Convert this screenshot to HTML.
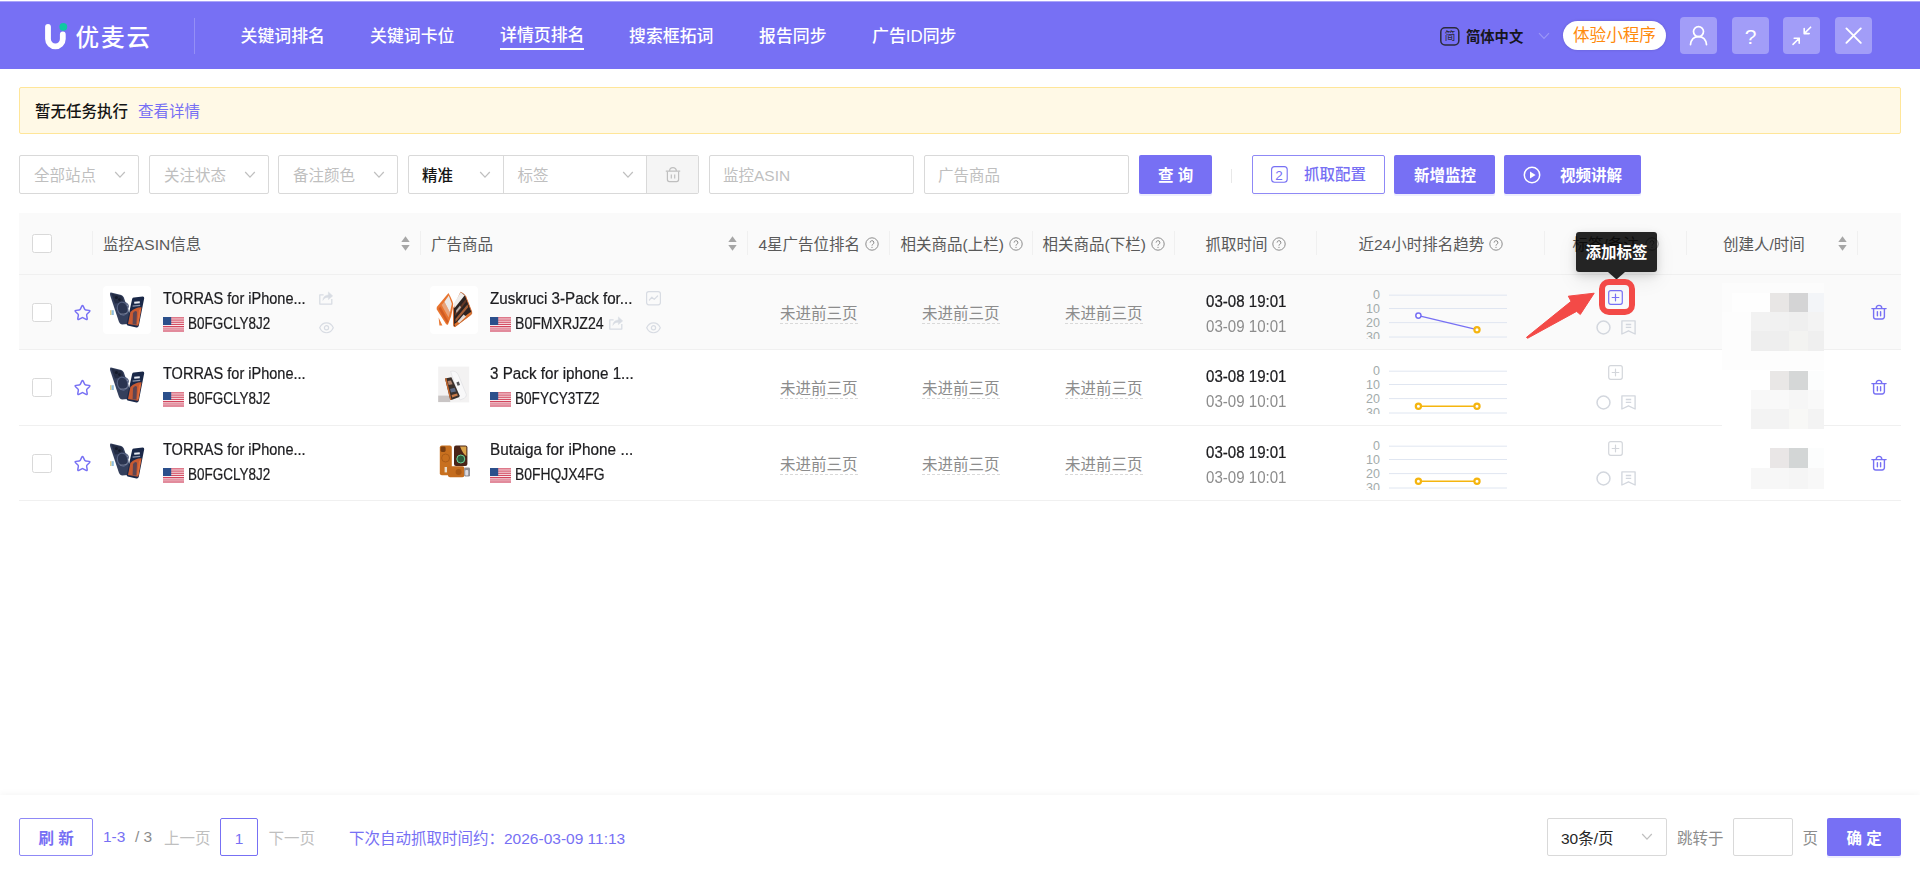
<!DOCTYPE html>
<html lang="zh-CN">
<head>
<meta charset="utf-8">
<title>优麦云 - 详情页排名</title>
<style>
*{box-sizing:border-box;margin:0;padding:0}
html,body{width:1920px;height:878px;overflow:hidden;background:#fff}
body{position:relative;font-family:"Liberation Sans","Noto Sans CJK SC",sans-serif;font-size:15.5px;color:#262626;line-height:1}
.abs{position:absolute}
.t{position:absolute;white-space:nowrap;line-height:20px;height:20px}
svg{position:absolute;overflow:visible}
/* header */
#hd{position:absolute;left:0;top:1px;width:1920px;height:68px;background:#7770f4}
.nav{position:absolute;top:26px;height:22px;line-height:22px;font-size:16.9px;color:#fff;white-space:nowrap;font-weight:500}
.hb{position:absolute;top:17px;width:37px;height:37px;border-radius:4px;background:#a29df8}
/* alert */
#alert{position:absolute;left:19px;top:87px;width:1882px;height:47px;background:#fff9e6;border:1px solid #ffe699;border-radius:2px}
/* filters */
.sel{position:absolute;top:155px;height:39px;border:1px solid #d9d9d9;border-radius:2px;background:#fff}
.ph{color:#bfbfbf}
.btn{position:absolute;top:155px;height:39px;border-radius:2px;background:#7770f4;color:#fff;font-weight:bold;box-shadow:0 2px 0 rgba(119,112,244,.12)}
/* table */
#th{position:absolute;left:19px;top:213px;width:1882px;height:62px;background:#fafafa;border-bottom:1px solid #f0f0f0}
.sep{position:absolute;top:231px;width:1px;height:24px;background:#f0f0f0}
.h{position:absolute;top:234.7px;height:20px;line-height:20px;color:#595959;white-space:nowrap;font-size:15.5px}
.row{position:absolute;left:19px;width:1882px;border-bottom:1px solid #f0f0f0}
.cb{position:absolute;width:19.6px;height:19px;border:1px solid #d9d9d9;border-radius:2.5px;background:#fff}
.g{color:#8c8c8c}
.dash{border-bottom:1px dashed #d9d9d9}
.thumb{position:absolute;width:48px;height:48px;border-radius:4px;background:#fff}
</style>
</head>
<body>

<!-- ================= HEADER ================= -->
<div id="hd"></div><div class="abs" style="left:0;top:1px;width:1920px;height:1px;background:#aaa5f9"></div>
<div id="logo">
<svg style="left:40px;top:18px" width="32" height="36" viewBox="40 18 32 36">
<path d="M48 26.8 V39 a7.4 7.4 0 0 0 14.8 0 V34.4" fill="none" stroke="#fff" stroke-width="5.8" stroke-linecap="round"/>
<circle cx="63.3" cy="26.8" r="3.9" fill="#10c9a2"/>
</svg>
<div class="t" style="left:75.5px;top:22px;height:32px;line-height:32px;font-size:23.6px;color:#fff;letter-spacing:1.9px;font-weight:500">优麦云</div>
<div class="abs" style="left:194px;top:18px;width:1px;height:36px;background:rgba(255,255,255,.22)"></div>
</div>
<div id="navs">
<div class="nav" style="left:240.5px">关键词排名</div>
<div class="nav" style="left:370px">关键词卡位</div>
<div class="nav" style="left:500px;top:25px">详情页排名</div>
<div class="abs" style="left:500px;top:48px;width:84px;height:2px;background:#fff"></div>
<div class="nav" style="left:629px">搜索框拓词</div>
<div class="nav" style="left:759px">报告同步</div>
<div class="nav" style="left:872px">广告ID同步</div>
</div>
<div id="hright">
<svg style="left:1440px;top:27px" width="20" height="19" viewBox="0 0 20 19"><rect x="0.8" y="0.8" width="18" height="17.2" rx="4.2" fill="none" stroke="#2b2b3a" stroke-width="1.5"/></svg>
<div class="t" style="left:1444.5px;top:27px;font-size:11px;color:#2b2b3a;line-height:19px;height:19px">简</div>
<div class="t" style="left:1466px;top:26px;font-size:14.3px;font-weight:bold;color:#16161d;line-height:22px;height:22px">简体中文</div>
<svg style="left:1538px;top:32px" width="12" height="8" viewBox="0 0 12 8"><path d="M1 1.2 L6 6.4 L11 1.2" fill="none" stroke="#9b96f7" stroke-width="1.2"/></svg>
<div class="abs" style="left:1563px;top:21px;width:103px;height:29px;border-radius:15px;background:#fff;box-shadow:0 0 3px rgba(0,0,0,.15)"></div>
<div class="t" style="left:1573px;top:24px;font-size:16.6px;color:#ff8a0c;line-height:24px;height:24px">体验小程序</div>
<div class="hb" style="left:1680px"></div>
<div class="hb" style="left:1732px"></div>
<div class="hb" style="left:1783px"></div>
<div class="hb" style="left:1835px"></div>
<svg style="left:1680px;top:17px" width="37" height="37" viewBox="0 0 37 37"><circle cx="18.5" cy="14.6" r="5" fill="none" stroke="#fff" stroke-width="1.7"/><path d="M10.5 27.6 c0.6-5.2 3.8-8 8-8 s7.4 2.8 8 8" fill="none" stroke="#fff" stroke-width="1.7" stroke-linecap="round"/></svg>
<div class="t" style="left:1732px;top:17px;width:37px;height:37px;line-height:39px;text-align:center;font-size:21px;color:#fff">?</div>
<svg style="left:1783px;top:17px" width="37" height="37" viewBox="0 0 37 37" fill="none" stroke="#fff" stroke-width="1.6" stroke-linecap="round" stroke-linejoin="round"><path d="M27.6 10.2 L21.2 16.6 M21.2 11.6 V16.6 H26.2"/><path d="M10 27.4 L16.2 21.2 M11.2 21.2 H16.2 V26.2"/></svg>
<svg style="left:1835px;top:17px" width="37" height="37" viewBox="0 0 37 37" fill="none" stroke="#fff" stroke-width="1.9" stroke-linecap="round"><path d="M11.4 11.4 L25.8 25.8 M25.8 11.4 L11.4 25.8"/></svg>
</div>

<!-- ================= ALERT ================= -->
<div id="alert">
<div class="t" style="left:15px;top:13.5px;color:#141414;font-weight:500">暂无任务执行</div>
<div class="t" style="left:118px;top:13.5px;color:#7770f4">查看详情</div>
</div>

<!-- ================= FILTERS ================= -->
<div id="filters">
<div class="sel" style="left:19px;width:120px"></div><div class="t ph" style="left:34px;top:166px">全部站点</div><svg style="left:114px;top:171px" width="12" height="8" viewBox="0 0 12 8"><path d="M1.2 1 L6 6.2 L10.8 1" fill="none" stroke="#bfbfbf" stroke-width="1.2"/></svg>
<div class="sel" style="left:149px;width:120px"></div><div class="t ph" style="left:164px;top:166px">关注状态</div><svg style="left:244px;top:171px" width="12" height="8" viewBox="0 0 12 8"><path d="M1.2 1 L6 6.2 L10.8 1" fill="none" stroke="#bfbfbf" stroke-width="1.2"/></svg>
<div class="sel" style="left:278px;width:120px"></div><div class="t ph" style="left:293px;top:166px">备注颜色</div><svg style="left:373px;top:171px" width="12" height="8" viewBox="0 0 12 8"><path d="M1.2 1 L6 6.2 L10.8 1" fill="none" stroke="#bfbfbf" stroke-width="1.2"/></svg>
<div class="sel" style="left:408px;width:291px"></div>
<div class="abs" style="left:503px;top:156px;width:1px;height:37px;background:#d9d9d9"></div>
<div class="abs" style="left:646px;top:156px;width:52px;height:37px;background:#f5f5f5;border-left:1px solid #d9d9d9"></div>
<div class="t" style="left:422px;top:166px;color:#141414;font-weight:500">精准</div><svg style="left:479px;top:171px" width="12" height="8" viewBox="0 0 12 8"><path d="M1.2 1 L6 6.2 L10.8 1" fill="none" stroke="#bfbfbf" stroke-width="1.2"/></svg>
<div class="t ph" style="left:517.5px;top:166px">标签</div><svg style="left:622px;top:171px" width="12" height="8" viewBox="0 0 12 8"><path d="M1.2 1 L6 6.2 L10.8 1" fill="none" stroke="#bfbfbf" stroke-width="1.2"/></svg>
<svg style="left:664px;top:166px" width="18" height="17" viewBox="0 0 18 17" fill="none" stroke="#bfbfbf" stroke-width="1.2"><path d="M1.8 5.2 H16.2 M5.6 5 C5.6 0.6 12.4 0.6 12.4 5"/><path d="M3.4 5.4 V13.6 a2 2 0 0 0 2 2 H12.6 a2 2 0 0 0 2-2 V5.4"/><path d="M7.3 8.6 V12.4 M10.7 8.6 V12.4"/></svg>
<div class="sel" style="left:709px;width:205px"></div><div class="t ph" style="left:723px;top:166px">监控ASIN</div>
<div class="sel" style="left:924px;width:205px"></div><div class="t ph" style="left:938px;top:166px">广告商品</div>
<div class="btn" style="left:1139px;width:73px"></div><div class="t" style="left:1158px;top:165.5px;color:#fff;font-weight:bold;word-spacing:0px">查 询</div>
<div class="abs" style="left:1231px;top:169px;width:1px;height:14px;background:#e8e8e8"></div>
<div class="abs" style="left:1252px;top:155px;width:133px;height:39px;border:1px solid #8f89f6;border-radius:2px;background:#fff;box-shadow:0 2px 0 rgba(0,0,0,.015)"></div>
<svg style="left:1271px;top:166px" width="17" height="17" viewBox="0 0 17 17"><rect x="0.6" y="0.6" width="15.6" height="15.6" rx="3" fill="none" stroke="#7770f4" stroke-width="1.1"/></svg><div class="t" style="left:1275.3px;top:165.5px;font-size:13.5px;color:#7770f4">2</div><div class="t" style="left:1304px;top:165px;color:#7770f4;font-weight:500">抓取配置</div>
<div class="btn" style="left:1394px;width:101px"></div><div class="t" style="left:1414px;top:165.5px;color:#fff;font-weight:bold">新增监控</div>
<div class="btn" style="left:1504px;width:137px"></div><svg style="left:1522.5px;top:165.5px" width="18" height="18" viewBox="0 0 18 18"><circle cx="9" cy="9" r="7.7" fill="none" stroke="#fff" stroke-width="1.5"/><path d="M7 5.4 L12.6 9 L7 12.6 Z" fill="#fff"/></svg><div class="t" style="left:1560px;top:165.5px;color:#fff;font-weight:bold">视频讲解</div>
</div>

<!-- ================= TABLE ================= -->
<div id="th"></div>
<div id="thc">
<div class="cb" style="left:32px;top:234px"></div>
<div class="sep" style="left:92px"></div><div class="sep" style="left:420px"></div><div class="sep" style="left:747px"></div><div class="sep" style="left:889px"></div><div class="sep" style="left:1032px"></div><div class="sep" style="left:1174px"></div><div class="sep" style="left:1316px"></div><div class="sep" style="left:1544px"></div><div class="sep" style="left:1686px"></div><div class="sep" style="left:1857px"></div>
<div class="h" style="left:103px">监控ASIN信息</div><svg style="left:400.5px;top:236px" width="9" height="15" viewBox="0 0 9 15"><path d="M4.5 0.3 L8.7 6 H0.3 Z" fill="#a6a6a6"/><path d="M4.5 14.7 L8.7 9 H0.3 Z" fill="#a6a6a6"/></svg>
<div class="h" style="left:431px">广告商品</div><svg style="left:727.5px;top:236px" width="9" height="15" viewBox="0 0 9 15"><path d="M4.5 0.3 L8.7 6 H0.3 Z" fill="#a6a6a6"/><path d="M4.5 14.7 L8.7 9 H0.3 Z" fill="#a6a6a6"/></svg>
<div class="h" style="left:758.5px">4星广告位排名</div><svg style="left:865px;top:237px" width="14" height="14" viewBox="0 0 14 14"><circle cx="7" cy="7" r="6.2" fill="none" stroke="#8c8c8c" stroke-width="1"/><path d="M5.1 5.6 a1.9 1.9 0 1 1 2.7 1.7 c-0.6 0.3-0.8 0.6-0.8 1.3" fill="none" stroke="#8c8c8c" stroke-width="1"/><circle cx="7" cy="10.3" r="0.65" fill="#8c8c8c"/></svg>
<div class="h" style="left:900.5px">相关商品(上栏)</div><svg style="left:1008.5px;top:237px" width="14" height="14" viewBox="0 0 14 14"><circle cx="7" cy="7" r="6.2" fill="none" stroke="#8c8c8c" stroke-width="1"/><path d="M5.1 5.6 a1.9 1.9 0 1 1 2.7 1.7 c-0.6 0.3-0.8 0.6-0.8 1.3" fill="none" stroke="#8c8c8c" stroke-width="1"/><circle cx="7" cy="10.3" r="0.65" fill="#8c8c8c"/></svg>
<div class="h" style="left:1042.5px">相关商品(下栏)</div><svg style="left:1151px;top:237px" width="14" height="14" viewBox="0 0 14 14"><circle cx="7" cy="7" r="6.2" fill="none" stroke="#8c8c8c" stroke-width="1"/><path d="M5.1 5.6 a1.9 1.9 0 1 1 2.7 1.7 c-0.6 0.3-0.8 0.6-0.8 1.3" fill="none" stroke="#8c8c8c" stroke-width="1"/><circle cx="7" cy="10.3" r="0.65" fill="#8c8c8c"/></svg>
<div class="h" style="left:1205.5px">抓取时间</div><svg style="left:1272px;top:237px" width="14" height="14" viewBox="0 0 14 14"><circle cx="7" cy="7" r="6.2" fill="none" stroke="#8c8c8c" stroke-width="1"/><path d="M5.1 5.6 a1.9 1.9 0 1 1 2.7 1.7 c-0.6 0.3-0.8 0.6-0.8 1.3" fill="none" stroke="#8c8c8c" stroke-width="1"/><circle cx="7" cy="10.3" r="0.65" fill="#8c8c8c"/></svg>
<div class="h" style="left:1358.5px">近24小时排名趋势</div><svg style="left:1489px;top:237px" width="14" height="14" viewBox="0 0 14 14"><circle cx="7" cy="7" r="6.2" fill="none" stroke="#8c8c8c" stroke-width="1"/><path d="M5.1 5.6 a1.9 1.9 0 1 1 2.7 1.7 c-0.6 0.3-0.8 0.6-0.8 1.3" fill="none" stroke="#8c8c8c" stroke-width="1"/><circle cx="7" cy="10.3" r="0.65" fill="#8c8c8c"/></svg>
<div class="h" style="left:1572.5px">标签/备注</div><svg style="left:1645px;top:237px" width="14" height="14" viewBox="0 0 14 14"><circle cx="7" cy="7" r="6.2" fill="none" stroke="#8c8c8c" stroke-width="1"/><path d="M5.1 5.6 a1.9 1.9 0 1 1 2.7 1.7 c-0.6 0.3-0.8 0.6-0.8 1.3" fill="none" stroke="#8c8c8c" stroke-width="1"/><circle cx="7" cy="10.3" r="0.65" fill="#8c8c8c"/></svg>
<div class="h" style="left:1723px">创建人/时间</div><svg style="left:1837.5px;top:236px" width="9" height="15" viewBox="0 0 9 15"><path d="M4.5 0.3 L8.7 6 H0.3 Z" fill="#a6a6a6"/><path d="M4.5 14.7 L8.7 9 H0.3 Z" fill="#a6a6a6"/></svg>
</div>
<div id="rows">
<div class="abs" style="left:19px;top:275px;width:1882px;height:74px;background:#fafafa"></div>
<div class="abs" style="left:19px;top:349px;width:1882px;height:1px;background:#f0f0f0"></div>
<div class="abs" style="left:19px;top:425px;width:1882px;height:1px;background:#f0f0f0"></div>
<div class="abs" style="left:19px;top:500px;width:1882px;height:1px;background:#f0f0f0"></div>
<!-- row 1 -->
<div class="cb" style="left:32px;top:302.7px"></div><svg style="left:72.7px;top:302.9px" width="19" height="19" viewBox="0 0 19 19"><path d="M8.80 3.14 Q9.50 1.70 10.20 3.14 L11.62 6.08 Q11.97 6.80 12.76 6.91 L16.00 7.36 Q17.58 7.57 16.43 8.68 L14.07 10.94 Q13.49 11.50 13.64 12.29 L14.21 15.50 Q14.50 17.08 13.09 16.32 L10.21 14.78 Q9.50 14.40 8.79 14.78 L5.91 16.32 Q4.50 17.08 4.79 15.50 L5.36 12.29 Q5.51 11.50 4.93 10.94 L2.57 8.68 Q1.42 7.57 3.00 7.36 L6.24 6.91 Q7.03 6.80 7.38 6.08 Z" fill="none" stroke="#7770f4" stroke-width="1.45" stroke-linejoin="round"/></svg>
<div class="thumb" style="left:103px;top:286px;background:#fff"></div><svg style="left:103px;top:286px;filter:blur(.35px)" width="48" height="48" viewBox="0 0 48 48"><rect x="7" y="24.2" width="1.6" height="4.8" fill="#e6cf8a"/><rect x="8.6" y="24.2" width="2.2" height="4.8" fill="#8fbfe0"/><path d="M8 6.6 L18.2 9 Q20 9.6 20.8 11.6 L27.6 31 Q29.4 36.6 27.6 37.8 L19 38.6 Q17 38.4 16 36 L7.2 9.4 Q6.6 6.4 8 6.6 Z" fill="#343f5c"/><path d="M8.4 7.6 L17.8 9.8 Q19.2 10.4 19.6 12 L20.6 16 L12 17.4 Z" fill="#232b42"/><circle cx="13.4" cy="11.4" r="1.5" fill="#141a2a"/><circle cx="16.4" cy="13.6" r="1.3" fill="#141a2a"/><ellipse cx="19.6" cy="22.6" rx="5.2" ry="6.6" transform="rotate(-16 19.6 22.6)" fill="#2a3450" stroke="#566283" stroke-width="1.1"/><path d="M22 16.6 Q26 18 25.2 21.6" fill="none" stroke="#4a5676" stroke-width="1.1"/><path d="M17 28 Q21 28.6 24.6 26.8" fill="none" stroke="#8b93a8" stroke-width=".7"/><path d="M31 11.4 L39.8 10.4 Q41.4 10.4 41.2 12.2 L35.8 39.8 Q35.2 41.8 33.4 41.4 L24.6 39.4 Q23.4 39 23.8 37.6 L29.2 12.8 Q29.6 11.4 31 11.4 Z" fill="#1a2848"/><path d="M27.4 26 Q33 21 38.6 21.4 L35.2 39.8 L25 38 Z" fill="#c85a32"/><path d="M30 27 Q32.6 23.6 34 26 L33.4 38.6 L29.6 38.4 Z" fill="#44405a" opacity=".8"/><path d="M36 24 L38 22.6 L35.4 38.6 L34 38 Z" fill="#e2703c" opacity=".9"/><rect x="31.2" y="15.6" width="5.6" height="1.8" fill="#e8ebf3" transform="rotate(-5 34 16.5)"/><rect x="29.6" y="19.2" width="7.6" height="1.2" fill="#8c95ad" transform="rotate(-5 33 19.8)"/></svg>
<div class="t" style="left:163px;top:289px;color:#1c1c1f;-webkit-text-stroke:.22px #1c1c1f;font-size:15.8px;transform:scaleX(0.9191);transform-origin:0 0">TORRAS for iPhone...</div><svg style="left:163px;top:317px" width="21" height="15" viewBox="0 0 21 15"><rect width="21" height="15" fill="#fbf3f4"/><rect y="0.3" width="21" height="1.15" fill="#d2455d"/><rect y="2.5" width="21" height="1.15" fill="#d2455d"/><rect y="4.65" width="21" height="1.15" fill="#d2455d"/><rect y="6.8" width="21" height="1.15" fill="#d2455d"/><rect y="8.95" width="21" height="1.15" fill="#d2455d"/><rect y="10.5" width="21" height="4.5" fill="#e28b9c"/><rect y="11.8" width="21" height="0.6" fill="#eeb9c3"/><rect width="8.2" height="8" fill="#2b4f8b"/></svg><div class="t" style="left:187.6px;top:314px;color:#1c1c1f;-webkit-text-stroke:.22px #1c1c1f;font-size:15.8px;transform:scaleX(0.8535);transform-origin:0 0">B0FGCLY8J2</div>
<svg style="left:319.3px;top:290.6px" width="14" height="14" viewBox="0 0 14 14" fill="none" stroke="#d8dce3" stroke-width="1.25" stroke-linejoin="round"><path d="M4.6 3.8 H0.8 V13 H12.8 V8"/><path d="M3.8 9.4 C4 6 6 4.2 9.4 4 V0.9 L13.7 4.9 L9.4 8.6 V6.2 C6.8 6.2 5.2 7.2 3.8 9.4 Z" fill="#d8dce3" stroke-width="0.5"/></svg><svg style="left:319.3px;top:321.8px" width="15" height="12" viewBox="0 0 15 12" fill="none" stroke="#d8dce3" stroke-width="1.2"><path d="M0.7 5.8 C3.6 -0.8 11.4 -0.8 14.3 5.8 C11.4 12.4 3.6 12.4 0.7 5.8 Z"/><circle cx="7.5" cy="5.8" r="2.1"/></svg>
<div class="thumb" style="left:430px;top:286px;background:#fff"></div><svg style="left:430px;top:286px;filter:blur(.35px)" width="48" height="48" viewBox="0 0 48 48"><path d="M8.6 31.4 L12.4 39.4 L9.4 39.4 Z" fill="#ea7a35"/><path d="M18.5 6.9 Q22.6 14.6 23.2 17.8 Q23.4 20 21 30.4 L18 38.4 Q17 39.2 16 38 L6.8 23.4 Q6.2 21.8 7.2 20.4 Z" fill="#e8742f"/><path d="M18.8 9.4 L21.8 17.8 L20 26.6 L14.4 15.8 Z" fill="#ebe9e8"/><path d="M14.4 15.8 L20 26.6 L18.6 31.6 L11.6 19 Z" fill="#e9c9b6" opacity=".55"/><path d="M8.6 22.8 L10.4 20.6 L18.6 35.4 L17.2 37.4 Z" fill="#c9531f" opacity=".75"/><path d="M30.7 6.3 Q33.6 7.2 35.6 10.2 L41.6 25.6 Q42.2 27.6 40.8 28.8 L25.2 40.6 Q23.8 41 23.6 39.4 L23.4 22.6 Z" fill="#2c2321" stroke="#d9692b" stroke-width=".9"/><path d="M30.7 6.3 L34.6 9.6 L24.6 22 L23.8 17.4 Z" fill="#efedeb"/><path d="M24.4 38 L40.6 26 L41.6 28 L25 40.6 Z" fill="#e0742f"/><path d="M25 27 L35.4 13.6 L36.4 15.6 L25.2 30 Z" fill="#6a3a26" opacity=".9"/><path d="M25.4 33 L37.4 18.6 L38.4 21 L25.6 36 Z" fill="#b9683c" opacity=".85"/><path d="M27.6 35.6 L33.6 28.6 L36 30.4 L29 37.2 Z" fill="#eceae8" opacity=".9"/><path d="M26 24.6 L30 19.6 L31 21.4 L26.4 27 Z" fill="#e6e2de" opacity=".7"/></svg>
<div class="t" style="left:490px;top:289px;color:#1c1c1f;-webkit-text-stroke:.22px #1c1c1f;font-size:15.8px;transform:scaleX(0.9603);transform-origin:0 0">Zuskruci 3-Pack for...</div><svg style="left:490px;top:317px" width="21" height="15" viewBox="0 0 21 15"><rect width="21" height="15" fill="#fbf3f4"/><rect y="0.3" width="21" height="1.15" fill="#d2455d"/><rect y="2.5" width="21" height="1.15" fill="#d2455d"/><rect y="4.65" width="21" height="1.15" fill="#d2455d"/><rect y="6.8" width="21" height="1.15" fill="#d2455d"/><rect y="8.95" width="21" height="1.15" fill="#d2455d"/><rect y="10.5" width="21" height="4.5" fill="#e28b9c"/><rect y="11.8" width="21" height="0.6" fill="#eeb9c3"/><rect width="8.2" height="8" fill="#2b4f8b"/></svg><div class="t" style="left:515.2px;top:314px;color:#1c1c1f;-webkit-text-stroke:.22px #1c1c1f;font-size:15.8px;transform:scaleX(0.8929);transform-origin:0 0">B0FMXRJZ24</div>
<svg style="left:608.9px;top:315.8px" width="14" height="14" viewBox="0 0 14 14" fill="none" stroke="#d8dce3" stroke-width="1.25" stroke-linejoin="round"><path d="M4.6 3.8 H0.8 V13 H12.8 V8"/><path d="M3.8 9.4 C4 6 6 4.2 9.4 4 V0.9 L13.7 4.9 L9.4 8.6 V6.2 C6.8 6.2 5.2 7.2 3.8 9.4 Z" fill="#d8dce3" stroke-width="0.5"/></svg><svg style="left:646px;top:290.6px" width="15" height="15" viewBox="0 0 15 15" fill="none" stroke="#d8dce3" stroke-width="1.2" stroke-linejoin="round" stroke-linecap="round"><rect x="0.6" y="0.6" width="13.8" height="13.2" rx="2.2"/><path d="M3.4 9 L5.9 6.2 L8.2 8.4 L11.6 5"/></svg><svg style="left:646.2px;top:321.8px" width="15" height="12" viewBox="0 0 15 12" fill="none" stroke="#d8dce3" stroke-width="1.2"><path d="M0.7 5.8 C3.6 -0.8 11.4 -0.8 14.3 5.8 C11.4 12.4 3.6 12.4 0.7 5.8 Z"/><circle cx="7.5" cy="5.8" r="2.1"/></svg>
<div class="t g" style="left:780px;top:304px;width:78px;height:20px;line-height:20px;border-bottom:1px dashed #d9d9d9">未进前三页</div><div class="t g" style="left:922px;top:304px;width:78px;height:20px;line-height:20px;border-bottom:1px dashed #d9d9d9">未进前三页</div><div class="t g" style="left:1065px;top:304px;width:78px;height:20px;line-height:20px;border-bottom:1px dashed #d9d9d9">未进前三页</div>
<div class="t" style="left:1205.5px;top:291.5px;color:#1c1c1f;-webkit-text-stroke:.22px #1c1c1f;font-size:15.8px;transform:scaleX(0.9543);transform-origin:0 0">03-08 19:01</div><div class="t g" style="left:1205.5px;top:317px;font-size:15.8px;transform:scaleX(0.9543);transform-origin:0 0">03-09 10:01</div>
<svg style="left:1340px;top:285.0px;overflow:hidden" width="200" height="53.6" viewBox="1340 285 200 53.6"><g stroke="#e0e6f1" stroke-width="1"><line x1="1389" y1="295.2" x2="1507" y2="295.2"/><line x1="1389" y1="308.5" x2="1507" y2="308.5"/><line x1="1389" y1="322.6" x2="1507" y2="322.6"/><line x1="1389" y1="337.0" x2="1507" y2="337.0"/></g><g font-family="Liberation Sans, sans-serif" font-size="12.5" fill="#a3abab" text-anchor="end"><text x="1380" y="299.5">0</text><text x="1380" y="312.8">10</text><text x="1380" y="326.9">20</text><text x="1380" y="341.3">30</text></g><line x1="1418.4" y1="315.6" x2="1477" y2="329.7" stroke="#7770f4" stroke-width="1.2"/><circle cx="1418.4" cy="315.6" r="2.6" fill="#fff" stroke="#7770f4" stroke-width="1.5"/><circle cx="1477" cy="329.7" r="2.6" fill="#fff" stroke="#f5b50f" stroke-width="2.2"/></svg>
<svg style="left:1608.3px;top:290.3px" width="15" height="15" viewBox="0 0 15 15" fill="none" stroke="#7770f4" stroke-width="1.2" stroke-linecap="round"><rect x="0.7" y="0.7" width="13.6" height="13.6" rx="2"/><path d="M7.5 4.2 V10.8 M4.2 7.5 H10.8"/></svg><svg style="left:1596px;top:320.2px" width="15" height="15" viewBox="0 0 15 15"><circle cx="7.5" cy="7.5" r="6.45" fill="none" stroke="#d3d7de" stroke-width="1.55"/></svg><svg style="left:1621.2px;top:320.2px" width="15" height="15" viewBox="0 0 15 15" fill="none" stroke="#d3d7de" stroke-width="1.35" stroke-linejoin="round"><path d="M0.9 0.9 H14.1 V14 L7.5 10.8 L0.9 14 Z"/><path d="M4.8 4.5 H10.2 M4.8 7.3 H10.2"/></svg>
<svg style="left:1871px;top:304.2px" width="16" height="16" viewBox="0 0 16 16" fill="none" stroke="#7770f4" stroke-width="1.4" stroke-linecap="round"><path d="M0.9 4.6 H15.1"/><path d="M5.2 4.4 C5.2 0.4 10.8 0.4 10.8 4.4"/><path d="M2.6 4.8 V12.8 a2.2 2.2 0 0 0 2.2 2.2 H11.2 a2.2 2.2 0 0 0 2.2-2.2 V4.8"/><path d="M6.4 7.6 V11.8 M9.6 7.6 V11.8"/></svg>
<!-- row 2 -->
<div class="cb" style="left:32px;top:377.7px"></div><svg style="left:72.7px;top:377.9px" width="19" height="19" viewBox="0 0 19 19"><path d="M8.80 3.14 Q9.50 1.70 10.20 3.14 L11.62 6.08 Q11.97 6.80 12.76 6.91 L16.00 7.36 Q17.58 7.57 16.43 8.68 L14.07 10.94 Q13.49 11.50 13.64 12.29 L14.21 15.50 Q14.50 17.08 13.09 16.32 L10.21 14.78 Q9.50 14.40 8.79 14.78 L5.91 16.32 Q4.50 17.08 4.79 15.50 L5.36 12.29 Q5.51 11.50 4.93 10.94 L2.57 8.68 Q1.42 7.57 3.00 7.36 L6.24 6.91 Q7.03 6.80 7.38 6.08 Z" fill="none" stroke="#7770f4" stroke-width="1.45" stroke-linejoin="round"/></svg>
<div class="thumb" style="left:103px;top:361px;background:#fff"></div><svg style="left:103px;top:361px;filter:blur(.35px)" width="48" height="48" viewBox="0 0 48 48"><rect x="7" y="24.2" width="1.6" height="4.8" fill="#e6cf8a"/><rect x="8.6" y="24.2" width="2.2" height="4.8" fill="#8fbfe0"/><path d="M8 6.6 L18.2 9 Q20 9.6 20.8 11.6 L27.6 31 Q29.4 36.6 27.6 37.8 L19 38.6 Q17 38.4 16 36 L7.2 9.4 Q6.6 6.4 8 6.6 Z" fill="#343f5c"/><path d="M8.4 7.6 L17.8 9.8 Q19.2 10.4 19.6 12 L20.6 16 L12 17.4 Z" fill="#232b42"/><circle cx="13.4" cy="11.4" r="1.5" fill="#141a2a"/><circle cx="16.4" cy="13.6" r="1.3" fill="#141a2a"/><ellipse cx="19.6" cy="22.6" rx="5.2" ry="6.6" transform="rotate(-16 19.6 22.6)" fill="#2a3450" stroke="#566283" stroke-width="1.1"/><path d="M22 16.6 Q26 18 25.2 21.6" fill="none" stroke="#4a5676" stroke-width="1.1"/><path d="M17 28 Q21 28.6 24.6 26.8" fill="none" stroke="#8b93a8" stroke-width=".7"/><path d="M31 11.4 L39.8 10.4 Q41.4 10.4 41.2 12.2 L35.8 39.8 Q35.2 41.8 33.4 41.4 L24.6 39.4 Q23.4 39 23.8 37.6 L29.2 12.8 Q29.6 11.4 31 11.4 Z" fill="#1a2848"/><path d="M27.4 26 Q33 21 38.6 21.4 L35.2 39.8 L25 38 Z" fill="#c85a32"/><path d="M30 27 Q32.6 23.6 34 26 L33.4 38.6 L29.6 38.4 Z" fill="#44405a" opacity=".8"/><path d="M36 24 L38 22.6 L35.4 38.6 L34 38 Z" fill="#e2703c" opacity=".9"/><rect x="31.2" y="15.6" width="5.6" height="1.8" fill="#e8ebf3" transform="rotate(-5 34 16.5)"/><rect x="29.6" y="19.2" width="7.6" height="1.2" fill="#8c95ad" transform="rotate(-5 33 19.8)"/></svg>
<div class="t" style="left:163px;top:364px;color:#1c1c1f;-webkit-text-stroke:.22px #1c1c1f;font-size:15.8px;transform:scaleX(0.9191);transform-origin:0 0">TORRAS for iPhone...</div><svg style="left:163px;top:392px" width="21" height="15" viewBox="0 0 21 15"><rect width="21" height="15" fill="#fbf3f4"/><rect y="0.3" width="21" height="1.15" fill="#d2455d"/><rect y="2.5" width="21" height="1.15" fill="#d2455d"/><rect y="4.65" width="21" height="1.15" fill="#d2455d"/><rect y="6.8" width="21" height="1.15" fill="#d2455d"/><rect y="8.95" width="21" height="1.15" fill="#d2455d"/><rect y="10.5" width="21" height="4.5" fill="#e28b9c"/><rect y="11.8" width="21" height="0.6" fill="#eeb9c3"/><rect width="8.2" height="8" fill="#2b4f8b"/></svg><div class="t" style="left:187.6px;top:389px;color:#1c1c1f;-webkit-text-stroke:.22px #1c1c1f;font-size:15.8px;transform:scaleX(0.8535);transform-origin:0 0">B0FGCLY8J2</div>
<svg style="left:430px;top:361px;filter:blur(.3px)" width="48" height="48" viewBox="0 0 48 48"><rect x="8.2" y="5.6" width="31" height="35.8" fill="#f3f2f2"/><rect x="8.2" y="34.6" width="12" height="6.4" fill="#c9c5c5"/><path d="M20.6 10.4 Q26 9 28.4 14 L36.4 33.6 Q36.6 36 34 37.4 L30 39 Z" fill="#f8f8f9" stroke="#dcdcdf" stroke-width=".6"/><path d="M15 17.4 L21.4 16.2 L29.6 34.6 Q29.8 35.6 28.8 36.2 L21.4 39 Q20.4 39 20 38 Z" fill="#3a302c"/><path d="M15 17.4 L16.4 17.1 L21.6 38.9 L20.4 38.9 Q20 38.6 20 38 Z" fill="#c9672c"/><path d="M17.6 20 L21 19.4 L22.6 23.2 L18.6 24 Z" fill="#b08570"/><path d="M20 28 L24.6 26.8 L26 30.4 L21 31.6 Z" fill="#5c6a86"/><path d="M21.6 34 L27 32.4 L27.8 34.6 L22.2 36.4 Z" fill="#c77a4a"/><rect x="27" y="21" width="2.6" height="3.6" fill="#55555a" transform="rotate(-20 28 23)"/></svg>
<div class="t" style="left:490px;top:364px;color:#1c1c1f;-webkit-text-stroke:.22px #1c1c1f;font-size:15.8px;transform:scaleX(0.9631);transform-origin:0 0">3 Pack for iphone 1...</div><svg style="left:490px;top:392px" width="21" height="15" viewBox="0 0 21 15"><rect width="21" height="15" fill="#fbf3f4"/><rect y="0.3" width="21" height="1.15" fill="#d2455d"/><rect y="2.5" width="21" height="1.15" fill="#d2455d"/><rect y="4.65" width="21" height="1.15" fill="#d2455d"/><rect y="6.8" width="21" height="1.15" fill="#d2455d"/><rect y="8.95" width="21" height="1.15" fill="#d2455d"/><rect y="10.5" width="21" height="4.5" fill="#e28b9c"/><rect y="11.8" width="21" height="0.6" fill="#eeb9c3"/><rect width="8.2" height="8" fill="#2b4f8b"/></svg><div class="t" style="left:515.2px;top:389px;color:#1c1c1f;-webkit-text-stroke:.22px #1c1c1f;font-size:15.8px;transform:scaleX(0.8602);transform-origin:0 0">B0FYCY3TZ2</div>
<div class="t g" style="left:780px;top:379px;width:78px;height:20px;line-height:20px;border-bottom:1px dashed #d9d9d9">未进前三页</div><div class="t g" style="left:922px;top:379px;width:78px;height:20px;line-height:20px;border-bottom:1px dashed #d9d9d9">未进前三页</div><div class="t g" style="left:1065px;top:379px;width:78px;height:20px;line-height:20px;border-bottom:1px dashed #d9d9d9">未进前三页</div>
<div class="t" style="left:1205.5px;top:366.5px;color:#1c1c1f;-webkit-text-stroke:.22px #1c1c1f;font-size:15.8px;transform:scaleX(0.9543);transform-origin:0 0">03-08 19:01</div><div class="t g" style="left:1205.5px;top:392px;font-size:15.8px;transform:scaleX(0.9543);transform-origin:0 0">03-09 10:01</div>
<svg style="left:1340px;top:360.8px;overflow:hidden" width="200" height="53.6" viewBox="1340 285 200 53.6"><g stroke="#e0e6f1" stroke-width="1"><line x1="1389" y1="295.2" x2="1507" y2="295.2"/><line x1="1389" y1="308.5" x2="1507" y2="308.5"/><line x1="1389" y1="322.6" x2="1507" y2="322.6"/><line x1="1389" y1="337.0" x2="1507" y2="337.0"/></g><g font-family="Liberation Sans, sans-serif" font-size="12.5" fill="#a3abab" text-anchor="end"><text x="1380" y="299.5">0</text><text x="1380" y="312.8">10</text><text x="1380" y="326.9">20</text><text x="1380" y="341.3">30</text></g><line x1="1418.4" y1="330.3" x2="1477" y2="330.3" stroke="#f5b50f" stroke-width="1.6"/><circle cx="1418.4" cy="330.3" r="2.6" fill="#fff" stroke="#f5b50f" stroke-width="2.2"/><circle cx="1477" cy="330.3" r="2.6" fill="#fff" stroke="#f5b50f" stroke-width="2.2"/></svg>
<svg style="left:1608.3px;top:365.3px" width="15" height="15" viewBox="0 0 15 15" fill="none" stroke="#d3d6db" stroke-width="1.2" stroke-linecap="round"><rect x="0.7" y="0.7" width="13.6" height="13.6" rx="2"/><path d="M7.5 4.2 V10.8 M4.2 7.5 H10.8"/></svg><svg style="left:1596px;top:395.2px" width="15" height="15" viewBox="0 0 15 15"><circle cx="7.5" cy="7.5" r="6.45" fill="none" stroke="#d3d7de" stroke-width="1.55"/></svg><svg style="left:1621.2px;top:395.2px" width="15" height="15" viewBox="0 0 15 15" fill="none" stroke="#d3d7de" stroke-width="1.35" stroke-linejoin="round"><path d="M0.9 0.9 H14.1 V14 L7.5 10.8 L0.9 14 Z"/><path d="M4.8 4.5 H10.2 M4.8 7.3 H10.2"/></svg>
<svg style="left:1871px;top:379.2px" width="16" height="16" viewBox="0 0 16 16" fill="none" stroke="#7770f4" stroke-width="1.4" stroke-linecap="round"><path d="M0.9 4.6 H15.1"/><path d="M5.2 4.4 C5.2 0.4 10.8 0.4 10.8 4.4"/><path d="M2.6 4.8 V12.8 a2.2 2.2 0 0 0 2.2 2.2 H11.2 a2.2 2.2 0 0 0 2.2-2.2 V4.8"/><path d="M6.4 7.6 V11.8 M9.6 7.6 V11.8"/></svg>
<!-- row 3 -->
<div class="cb" style="left:32px;top:453.7px"></div><svg style="left:72.7px;top:453.9px" width="19" height="19" viewBox="0 0 19 19"><path d="M8.80 3.14 Q9.50 1.70 10.20 3.14 L11.62 6.08 Q11.97 6.80 12.76 6.91 L16.00 7.36 Q17.58 7.57 16.43 8.68 L14.07 10.94 Q13.49 11.50 13.64 12.29 L14.21 15.50 Q14.50 17.08 13.09 16.32 L10.21 14.78 Q9.50 14.40 8.79 14.78 L5.91 16.32 Q4.50 17.08 4.79 15.50 L5.36 12.29 Q5.51 11.50 4.93 10.94 L2.57 8.68 Q1.42 7.57 3.00 7.36 L6.24 6.91 Q7.03 6.80 7.38 6.08 Z" fill="none" stroke="#7770f4" stroke-width="1.45" stroke-linejoin="round"/></svg>
<div class="thumb" style="left:103px;top:437px;background:#fff"></div><svg style="left:103px;top:437px;filter:blur(.35px)" width="48" height="48" viewBox="0 0 48 48"><rect x="7" y="24.2" width="1.6" height="4.8" fill="#e6cf8a"/><rect x="8.6" y="24.2" width="2.2" height="4.8" fill="#8fbfe0"/><path d="M8 6.6 L18.2 9 Q20 9.6 20.8 11.6 L27.6 31 Q29.4 36.6 27.6 37.8 L19 38.6 Q17 38.4 16 36 L7.2 9.4 Q6.6 6.4 8 6.6 Z" fill="#343f5c"/><path d="M8.4 7.6 L17.8 9.8 Q19.2 10.4 19.6 12 L20.6 16 L12 17.4 Z" fill="#232b42"/><circle cx="13.4" cy="11.4" r="1.5" fill="#141a2a"/><circle cx="16.4" cy="13.6" r="1.3" fill="#141a2a"/><ellipse cx="19.6" cy="22.6" rx="5.2" ry="6.6" transform="rotate(-16 19.6 22.6)" fill="#2a3450" stroke="#566283" stroke-width="1.1"/><path d="M22 16.6 Q26 18 25.2 21.6" fill="none" stroke="#4a5676" stroke-width="1.1"/><path d="M17 28 Q21 28.6 24.6 26.8" fill="none" stroke="#8b93a8" stroke-width=".7"/><path d="M31 11.4 L39.8 10.4 Q41.4 10.4 41.2 12.2 L35.8 39.8 Q35.2 41.8 33.4 41.4 L24.6 39.4 Q23.4 39 23.8 37.6 L29.2 12.8 Q29.6 11.4 31 11.4 Z" fill="#1a2848"/><path d="M27.4 26 Q33 21 38.6 21.4 L35.2 39.8 L25 38 Z" fill="#c85a32"/><path d="M30 27 Q32.6 23.6 34 26 L33.4 38.6 L29.6 38.4 Z" fill="#44405a" opacity=".8"/><path d="M36 24 L38 22.6 L35.4 38.6 L34 38 Z" fill="#e2703c" opacity=".9"/><rect x="31.2" y="15.6" width="5.6" height="1.8" fill="#e8ebf3" transform="rotate(-5 34 16.5)"/><rect x="29.6" y="19.2" width="7.6" height="1.2" fill="#8c95ad" transform="rotate(-5 33 19.8)"/></svg>
<div class="t" style="left:163px;top:440px;color:#1c1c1f;-webkit-text-stroke:.22px #1c1c1f;font-size:15.8px;transform:scaleX(0.9191);transform-origin:0 0">TORRAS for iPhone...</div><svg style="left:163px;top:468px" width="21" height="15" viewBox="0 0 21 15"><rect width="21" height="15" fill="#fbf3f4"/><rect y="0.3" width="21" height="1.15" fill="#d2455d"/><rect y="2.5" width="21" height="1.15" fill="#d2455d"/><rect y="4.65" width="21" height="1.15" fill="#d2455d"/><rect y="6.8" width="21" height="1.15" fill="#d2455d"/><rect y="8.95" width="21" height="1.15" fill="#d2455d"/><rect y="10.5" width="21" height="4.5" fill="#e28b9c"/><rect y="11.8" width="21" height="0.6" fill="#eeb9c3"/><rect width="8.2" height="8" fill="#2b4f8b"/></svg><div class="t" style="left:187.6px;top:465px;color:#1c1c1f;-webkit-text-stroke:.22px #1c1c1f;font-size:15.8px;transform:scaleX(0.8535);transform-origin:0 0">B0FGCLY8J2</div>
<svg style="left:430px;top:437px;filter:blur(.35px)" width="48" height="48" viewBox="0 0 48 48"><rect x="9.8" y="8.6" width="12" height="29.6" rx="2" fill="#c8701f"/><rect x="10.6" y="9.6" width="5" height="5.4" rx="1.4" fill="#7a3f12"/><circle cx="15.6" cy="21" r="4" fill="none" stroke="#a85a17" stroke-width=".9"/><rect x="14.6" y="30" width="2.4" height="5.4" fill="#e9dcc9"/><rect x="24" y="8.4" width="13.4" height="20.6" rx="2" fill="#4a2418"/><path d="M30 9.4 H36.4 V19 Q33 17 30 9.4 Z" fill="#d9a34a"/><circle cx="30.8" cy="22" r="4" fill="#2c5a3c" stroke="#6fd39a" stroke-width="1"/><rect x="18" y="29.2" width="16.4" height="11" rx="2" fill="#c46c1e"/><circle cx="28.6" cy="35" r="3" fill="#a95814"/><rect x="34.2" y="30.4" width="5.8" height="9.2" rx="1.4" fill="#8f8f96"/><rect x="35.2" y="33" width="3" height="5.6" rx="1" fill="#dcdce4"/></svg>
<div class="t" style="left:490px;top:440px;color:#1c1c1f;-webkit-text-stroke:.22px #1c1c1f;font-size:15.8px;transform:scaleX(0.9704);transform-origin:0 0">Butaiga for iPhone ...</div><svg style="left:490px;top:468px" width="21" height="15" viewBox="0 0 21 15"><rect width="21" height="15" fill="#fbf3f4"/><rect y="0.3" width="21" height="1.15" fill="#d2455d"/><rect y="2.5" width="21" height="1.15" fill="#d2455d"/><rect y="4.65" width="21" height="1.15" fill="#d2455d"/><rect y="6.8" width="21" height="1.15" fill="#d2455d"/><rect y="8.95" width="21" height="1.15" fill="#d2455d"/><rect y="10.5" width="21" height="4.5" fill="#e28b9c"/><rect y="11.8" width="21" height="0.6" fill="#eeb9c3"/><rect width="8.2" height="8" fill="#2b4f8b"/></svg><div class="t" style="left:515.2px;top:465px;color:#1c1c1f;-webkit-text-stroke:.22px #1c1c1f;font-size:15.8px;transform:scaleX(0.8787);transform-origin:0 0">B0FHQJX4FG</div>
<div class="t g" style="left:780px;top:455px;width:78px;height:20px;line-height:20px;border-bottom:1px dashed #d9d9d9">未进前三页</div><div class="t g" style="left:922px;top:455px;width:78px;height:20px;line-height:20px;border-bottom:1px dashed #d9d9d9">未进前三页</div><div class="t g" style="left:1065px;top:455px;width:78px;height:20px;line-height:20px;border-bottom:1px dashed #d9d9d9">未进前三页</div>
<div class="t" style="left:1205.5px;top:442.5px;color:#1c1c1f;-webkit-text-stroke:.22px #1c1c1f;font-size:15.8px;transform:scaleX(0.9543);transform-origin:0 0">03-08 19:01</div><div class="t g" style="left:1205.5px;top:468px;font-size:15.8px;transform:scaleX(0.9543);transform-origin:0 0">03-09 10:01</div>
<svg style="left:1340px;top:436.0px;overflow:hidden" width="200" height="53.6" viewBox="1340 285 200 53.6"><g stroke="#e0e6f1" stroke-width="1"><line x1="1389" y1="295.2" x2="1507" y2="295.2"/><line x1="1389" y1="308.5" x2="1507" y2="308.5"/><line x1="1389" y1="322.6" x2="1507" y2="322.6"/><line x1="1389" y1="337.0" x2="1507" y2="337.0"/></g><g font-family="Liberation Sans, sans-serif" font-size="12.5" fill="#a3abab" text-anchor="end"><text x="1380" y="299.5">0</text><text x="1380" y="312.8">10</text><text x="1380" y="326.9">20</text><text x="1380" y="341.3">30</text></g><line x1="1418.4" y1="330.3" x2="1477" y2="330.3" stroke="#f5b50f" stroke-width="1.6"/><circle cx="1418.4" cy="330.3" r="2.6" fill="#fff" stroke="#f5b50f" stroke-width="2.2"/><circle cx="1477" cy="330.3" r="2.6" fill="#fff" stroke="#f5b50f" stroke-width="2.2"/></svg>
<svg style="left:1608.3px;top:441.3px" width="15" height="15" viewBox="0 0 15 15" fill="none" stroke="#d3d6db" stroke-width="1.2" stroke-linecap="round"><rect x="0.7" y="0.7" width="13.6" height="13.6" rx="2"/><path d="M7.5 4.2 V10.8 M4.2 7.5 H10.8"/></svg><svg style="left:1596px;top:471.2px" width="15" height="15" viewBox="0 0 15 15"><circle cx="7.5" cy="7.5" r="6.45" fill="none" stroke="#d3d7de" stroke-width="1.55"/></svg><svg style="left:1621.2px;top:471.2px" width="15" height="15" viewBox="0 0 15 15" fill="none" stroke="#d3d7de" stroke-width="1.35" stroke-linejoin="round"><path d="M0.9 0.9 H14.1 V14 L7.5 10.8 L0.9 14 Z"/><path d="M4.8 4.5 H10.2 M4.8 7.3 H10.2"/></svg>
<svg style="left:1871px;top:455.2px" width="16" height="16" viewBox="0 0 16 16" fill="none" stroke="#7770f4" stroke-width="1.4" stroke-linecap="round"><path d="M0.9 4.6 H15.1"/><path d="M5.2 4.4 C5.2 0.4 10.8 0.4 10.8 4.4"/><path d="M2.6 4.8 V12.8 a2.2 2.2 0 0 0 2.2 2.2 H11.2 a2.2 2.2 0 0 0 2.2-2.2 V4.8"/><path d="M6.4 7.6 V11.8 M9.6 7.6 V11.8"/></svg>
</div>

<!-- ================= ANNOTATION ================= -->
<div id="anno">
<div class="abs" style="left:1722px;top:283px;width:102px;height:67px;background:#fcfcfc"></div><div class="abs" style="left:1722px;top:349px;width:102px;height:140px;background:#fff"></div><div class="abs" style="left:1722px;top:351px;width:102px;height:19px;background:#fdfdfd"></div>
<div class="abs" style="left:1731.5px;top:292.8px;width:38.3px;height:19.1px;background:#fefefe"></div><div class="abs" style="left:1722px;top:311.9px;width:28.7px;height:39.1px;background:#fdfdfd"></div>
<div class="abs" style="left:1769.8px;top:292.8px;width:19.4px;height:19.1px;background:#e8e6e5"></div><div class="abs" style="left:1789.2px;top:292.8px;width:19.2px;height:19.1px;background:#d4d4d5"></div><div class="abs" style="left:1808.4px;top:292.8px;width:15.4px;height:19.1px;background:#f3f5f8"></div><div class="abs" style="left:1750.7px;top:311.9px;width:19.1px;height:19.4px;background:#f2f2f2"></div><div class="abs" style="left:1769.8px;top:311.9px;width:19.4px;height:19.4px;background:#f1f1f1"></div><div class="abs" style="left:1789.2px;top:311.9px;width:19.2px;height:19.4px;background:#efefef"></div><div class="abs" style="left:1808.4px;top:311.9px;width:15.4px;height:19.4px;background:#f3f3f3"></div><div class="abs" style="left:1750.7px;top:331.3px;width:19.1px;height:19.7px;background:#eeeeee"></div><div class="abs" style="left:1769.8px;top:331.3px;width:19.4px;height:19.7px;background:#eeeeee"></div><div class="abs" style="left:1789.2px;top:331.3px;width:19.2px;height:19.7px;background:#f3f3f1"></div><div class="abs" style="left:1808.4px;top:331.3px;width:15.4px;height:19.7px;background:#efefef"></div>
<div class="abs" style="left:1769.8px;top:370.6px;width:19.4px;height:19.1px;background:#e9e7e6"></div><div class="abs" style="left:1789.2px;top:370.6px;width:19.2px;height:19.1px;background:#d5d7d7"></div><div class="abs" style="left:1808.4px;top:370.6px;width:15.4px;height:19.1px;background:#fcfdfd"></div><div class="abs" style="left:1750.7px;top:389.7px;width:19.1px;height:19.4px;background:#f8f8f8"></div><div class="abs" style="left:1769.8px;top:389.7px;width:19.4px;height:19.4px;background:#f9f9f9"></div><div class="abs" style="left:1789.2px;top:389.7px;width:19.2px;height:19.4px;background:#f6f6f6"></div><div class="abs" style="left:1808.4px;top:389.7px;width:15.4px;height:19.4px;background:#f9f9f9"></div><div class="abs" style="left:1750.7px;top:409.1px;width:19.1px;height:19.7px;background:#f3f3f3"></div><div class="abs" style="left:1769.8px;top:409.1px;width:19.4px;height:19.7px;background:#f3f3f3"></div><div class="abs" style="left:1789.2px;top:409.1px;width:19.2px;height:19.7px;background:#f8f8f6"></div><div class="abs" style="left:1808.4px;top:409.1px;width:15.4px;height:19.7px;background:#f3f3f3"></div>
<div class="abs" style="left:1769.8px;top:448.4px;width:19.4px;height:19.6px;background:#e9e6e6"></div><div class="abs" style="left:1789.2px;top:448.4px;width:19.2px;height:19.6px;background:#d3d6d6"></div><div class="abs" style="left:1808.4px;top:448.4px;width:15.4px;height:19.6px;background:#fcfdfd"></div><div class="abs" style="left:1750.7px;top:468px;width:19.1px;height:20.5px;background:#f7f7f7"></div><div class="abs" style="left:1769.8px;top:468px;width:19.4px;height:20.5px;background:#f7f7f7"></div><div class="abs" style="left:1789.2px;top:468px;width:19.2px;height:20.5px;background:#f5f5f5"></div><div class="abs" style="left:1808.4px;top:468px;width:15.4px;height:20.5px;background:#f8f8f8"></div>
<div class="abs" style="left:1576px;top:232px;width:81px;height:40px;border-radius:3px;background:rgba(0,0,0,.86);box-shadow:0 3px 8px rgba(0,0,0,.14),0 8px 20px rgba(0,0,0,.08)"></div>
<svg style="left:1607.5px;top:272px" width="17" height="8" viewBox="0 0 17 8"><path d="M0 0 H17 L8.5 7.6 Z" fill="#232323"/></svg>
<div class="t" style="left:1585.5px;top:242.5px;color:#fff;font-weight:bold;font-size:15.5px">添加标签</div>
<div class="abs" style="left:1599px;top:279px;width:36px;height:36px;border:6px solid #f34a47;border-radius:10px"></div>
<svg style="left:1520px;top:285px" width="80" height="58" viewBox="1520 285 80 58"><path d="M1526.5 337.3 L1571.1 301.3 L1568.3 296.2 L1594.2 293.2 L1580.3 314.5 L1576.6 311.4 L1527.5 338.3 Z" fill="#f34a47" stroke="#f34a47" stroke-width="1" stroke-linejoin="round"/></svg>
</div>

<!-- ================= FOOTER ================= -->
<div id="ft">
<div class="abs" style="left:0;top:795px;width:1920px;height:83px;background:#fff;box-shadow:0 -2px 6px rgba(0,0,0,.035)"></div>
<div class="abs" style="left:19px;top:818px;width:74px;height:38px;border:1px solid #8f89f6;border-radius:2px;background:#fff"></div><div class="t" style="left:38.5px;top:828.6px;color:#7770f4;font-weight:bold">刷 新</div>
<div class="t" style="left:103px;top:827px;color:#7770f4">1-3</div><div class="t" style="left:135px;top:827px;color:#8c8c8c">/ 3</div><div class="t" style="left:164px;top:828.8px;color:#bfbfbf">上一页</div>
<div class="abs" style="left:220px;top:818px;width:38px;height:38px;border:1px solid #7770f4;border-radius:2px;background:#fff"></div><div class="t" style="left:220px;top:828.8px;width:38px;text-align:center;color:#7770f4">1</div><div class="t" style="left:268.5px;top:828.8px;color:#bfbfbf">下一页</div>
<div class="t" style="left:349px;top:828.8px;color:#7770f4">下次自动抓取时间约：2026-03-09 11:13</div>
<div class="abs" style="left:1547px;top:818px;width:120px;height:38px;border:1px solid #d9d9d9;border-radius:2px;background:#fff"></div><div class="t" style="left:1561px;top:828.6px;color:#262626">30条/页</div><svg style="left:1641px;top:833px" width="12" height="8" viewBox="0 0 12 8"><path d="M1.2 1 L6 6.2 L10.8 1" fill="none" stroke="#bfbfbf" stroke-width="1.2"/></svg>
<div class="t" style="left:1677px;top:828.8px;color:#8c8c8c">跳转于</div><div class="abs" style="left:1733px;top:818px;width:60px;height:38px;border:1px solid #d9d9d9;border-radius:2px;background:#fff"></div><div class="t" style="left:1802.5px;top:828.8px;color:#8c8c8c">页</div>
<div class="abs" style="left:1827px;top:818px;width:74px;height:38px;border-radius:2px;background:#7770f4;box-shadow:0 2px 0 rgba(119,112,244,.12)"></div><div class="t" style="left:1846.5px;top:828.6px;color:#fff;font-weight:bold">确 定</div>
</div>

</body>
</html>
